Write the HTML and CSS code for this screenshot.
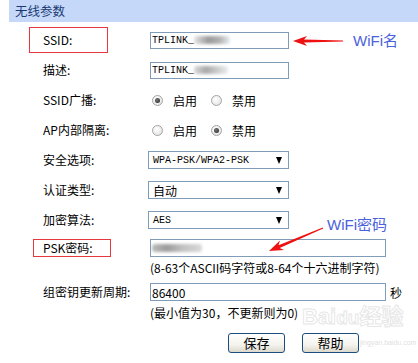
FILE: index.html
```html
<!DOCTYPE html>
<html>
	<head>
		<meta charset="utf-8" />
		<title>无线参数</title>
		<link rel="stylesheet" href="styles.css">
	</head>
	<body>
		<div class="page">
			<div class="title">无线参数</div>

			<div class="form">
				<div class="row">
					<div class="label"><span class="mark mark_ssid">SSID:</span></div>
					<div class="field">
						<div class="input short"><span class="mono">TPLINK_</span><span class="blur b1"></span></div>
					</div>
				</div>
				<div class="row">
					<div class="label">描述:</div>
					<div class="field">
						<div class="input short"><span class="mono">TPLINK_</span><span class="blur b2"></span></div>
					</div>
				</div>
				<div class="row">
					<div class="label">SSID广播:</div>
					<div class="field radios">
						<span class="radio on"></span><span class="opt">启用</span>
						<span class="radio"></span><span class="opt">禁用</span>
					</div>
				</div>
				<div class="row">
					<div class="label">AP内部隔离:</div>
					<div class="field radios">
						<span class="radio"></span><span class="opt">启用</span>
						<span class="radio on"></span><span class="opt">禁用</span>
					</div>
				</div>
				<div class="row">
					<div class="label">安全选项:</div>
					<div class="field">
						<div class="select"><span class="mono">WPA-PSK/WPA2-PSK</span><span class="caret"></span></div>
					</div>
				</div>
				<div class="row">
					<div class="label">认证类型:</div>
					<div class="field">
						<div class="select"><span>自动</span><span class="caret"></span></div>
					</div>
				</div>
				<div class="row">
					<div class="label">加密算法:</div>
					<div class="field">
						<div class="select"><span class="mono">AES</span><span class="caret"></span></div>
					</div>
				</div>
				<div class="row row_low">
					<div class="label"><span class="mark mark_psk">PSK密码:</span></div>
					<div class="field">
						<div class="input long"><span class="blur b3"></span></div>
					</div>
				</div>
				<div class="note">(8-63个ASCII码字符或8-64个十六进制字符)</div>
				<div class="row row_low row_key">
					<div class="label">组密钥更新周期:</div>
					<div class="field">
						<div class="input long">86400</div>
						<span class="unit">秒</span>
					</div>
				</div>
				<div class="note note2">(最小值为30，不更新则为0)</div>
				<div class="buttons">
					<button class="btn">保存</button>
					<button class="btn">帮助</button>
				</div>
			</div>

			<!-- 截图上的标注 -->
			<svg class="arrows" width="418" height="363" viewBox="0 0 418 363">
				<polygon fill="#ee1111" points="293,41 307,36 304,39.6 343,40.4 343,41.6 304,42.4 307,46" />
				<polygon fill="#ee1111" points="269,251 280,240.5 278.5,245.3 322.8,227.5 323.2,228.5 279.7,248.1 284,250" />
			</svg>
			<span class="tip tip_ssid">WiFi名</span>
			<span class="tip tip_psk">WiFi密码</span>
			<div class="watermark">Bai<b>du</b>经验</div>
			<div class="watermark_url">jingyan.baidu.com</div>
		</div>
	</body>
</html>
```

FILE: styles.css
```css
body {
	margin: 0;
	background-color: #fff;
	font-family: "Noto Sans CJK SC", sans-serif;
	font-size: 12px;
	color: #000;
}
.page {
	position: relative;
	width: 418px;
	height: 363px;
	overflow: hidden;
}
.title {
	margin-left: 9px;
	height: 22px;
	line-height: 22px;
	padding-left: 6px;
	background-color: #c5d8fa;
	color: #1b3a72;
	font-size: 12.5px;
}
.form {
	padding-top: 3px;
}
.row {
	display: flex;
	align-items: center;
	height: 30px;
}
.row_low {
	height: 26px;
}
.row_key {
	margin-top: 4px;
}
.label {
	width: 107px;
	padding-left: 43px;
	line-height: 16px;
	white-space: nowrap;
}
.field {
	display: flex;
	align-items: center;
}
.mono {
	font-family: "Liberation Mono", monospace;
	font-size: 10px;
	letter-spacing: 0;
}

/** 红框标注 **/
.mark {
	display: inline-block;
	box-sizing: border-box;
	border: 1px solid #e8383d;
}
.mark_ssid {
	margin-left: -14px;
	padding-left: 13px;
	width: 79px;
	height: 26px;
	line-height: 24px;
}
.mark_psk {
	margin-left: -10px;
	padding-left: 9px;
	width: 78px;
	height: 18px;
	line-height: 16px;
}

/** 输入框 **/
.input {
	box-sizing: border-box;
	display: flex;
	align-items: center;
	height: 17px;
	padding-left: 1px;
	border: 1px solid #7f9db9;
	background-color: #fff;
	white-space: nowrap;
	overflow: hidden;
}
.input.short {
	width: 139px;
}
.input.long {
	width: 236px;
	height: 18px;
}
.blur {
	display: inline-block;
	height: 8px;
	border-radius: 3px;
	filter: blur(1.5px);
}
.b1 {
	width: 36px;
	background: linear-gradient(90deg, #e4e4e4, #9a9a9a 40%, #b0b0b0 70%, #e6ecf0);
}
.b2 {
	width: 34px;
	background: linear-gradient(90deg, #dadada, #a8a8a8 35%, #c8c8c8 65%, #e8ecef);
}
.b3 {
	width: 50px;
	background: linear-gradient(90deg, #bbb, #9c9c9c 30%, #c0c0c0 60%, #d8d8d8);
}
.unit {
	margin-left: 4px;
}

/** 单选 **/
.radios {
	padding-left: 2px;
}
.radio {
	position: relative;
	box-sizing: border-box;
	width: 11px;
	height: 11px;
	border: 1px solid #a4a4a4;
	border-radius: 50%;
	background: radial-gradient(circle at 40% 35%, #fff, #dedede);
}
.radio.on::after {
	content: '';
	position: absolute;
	left: 2px;
	top: 2px;
	width: 5px;
	height: 5px;
	border-radius: 50%;
	background: radial-gradient(circle at 40% 40%, #777, #222);
}
.opt {
	margin-left: 10px;
	margin-right: 14px;
}

/** 下拉框 **/
.select {
	box-sizing: border-box;
	display: flex;
	align-items: center;
	justify-content: space-between;
	margin-left: -2px;
	width: 141px;
	height: 18px;
	padding: 0 6px 0 4px;
	border: 1px solid #7f9db9;
}
.caret {
	width: 0;
	height: 0;
	border-left: 3px solid transparent;
	border-right: 3px solid transparent;
	border-top: 7px solid #000;
}

.note {
	padding-left: 150px;
	height: 14px;
	line-height: 14px;
	white-space: nowrap;
}
.note2 {
	height: 16px;
	line-height: 16px;
}
.buttons {
	display: flex;
	gap: 17px;
	margin-top: 12px;
	padding-left: 228px;
}
.btn {
	width: 57px;
	height: 20px;
	padding: 0;
	border: 1px solid #1c4d7e;
	border-radius: 3px;
	background: linear-gradient(#fff, #f4f3ee 60%, #dcd9cc);
	font-family: "Noto Sans CJK SC", sans-serif;
	font-size: 13px;
	line-height: 18px;
	color: #000;
}

/** 标注文字与箭头 **/
.arrows {
	position: absolute;
	left: 0;
	top: 0;
	pointer-events: none;
}
.tip {
	position: absolute;
	font-family: "Liberation Sans", "Noto Sans CJK SC", sans-serif;
	font-size: 15px;
	line-height: 18px;
	color: #4a62dc;
	white-space: nowrap;
}
.tip_ssid {
	left: 353px;
	top: 32px;
}
.tip_psk {
	left: 327px;
	top: 216px;
}
.watermark {
	position: absolute;
	left: 302px;
	top: 304px;
	font-family: "Liberation Sans", "Noto Sans CJK SC", sans-serif;
	font-size: 22px;
	font-weight: bold;
	line-height: 26px;
	color: rgba(255, 255, 255, 0.6);
	-webkit-text-stroke: 1px rgba(205, 205, 205, 0.5);
	pointer-events: none;
}
.watermark b {
	font-size: 19px;
}
.watermark_url {
	position: absolute;
	left: 360px;
	top: 338px;
	font-family: "Liberation Sans", sans-serif;
	font-size: 7px;
	line-height: 10px;
	color: rgba(190, 190, 190, 0.5);
	white-space: nowrap;
	pointer-events: none;
}
```
